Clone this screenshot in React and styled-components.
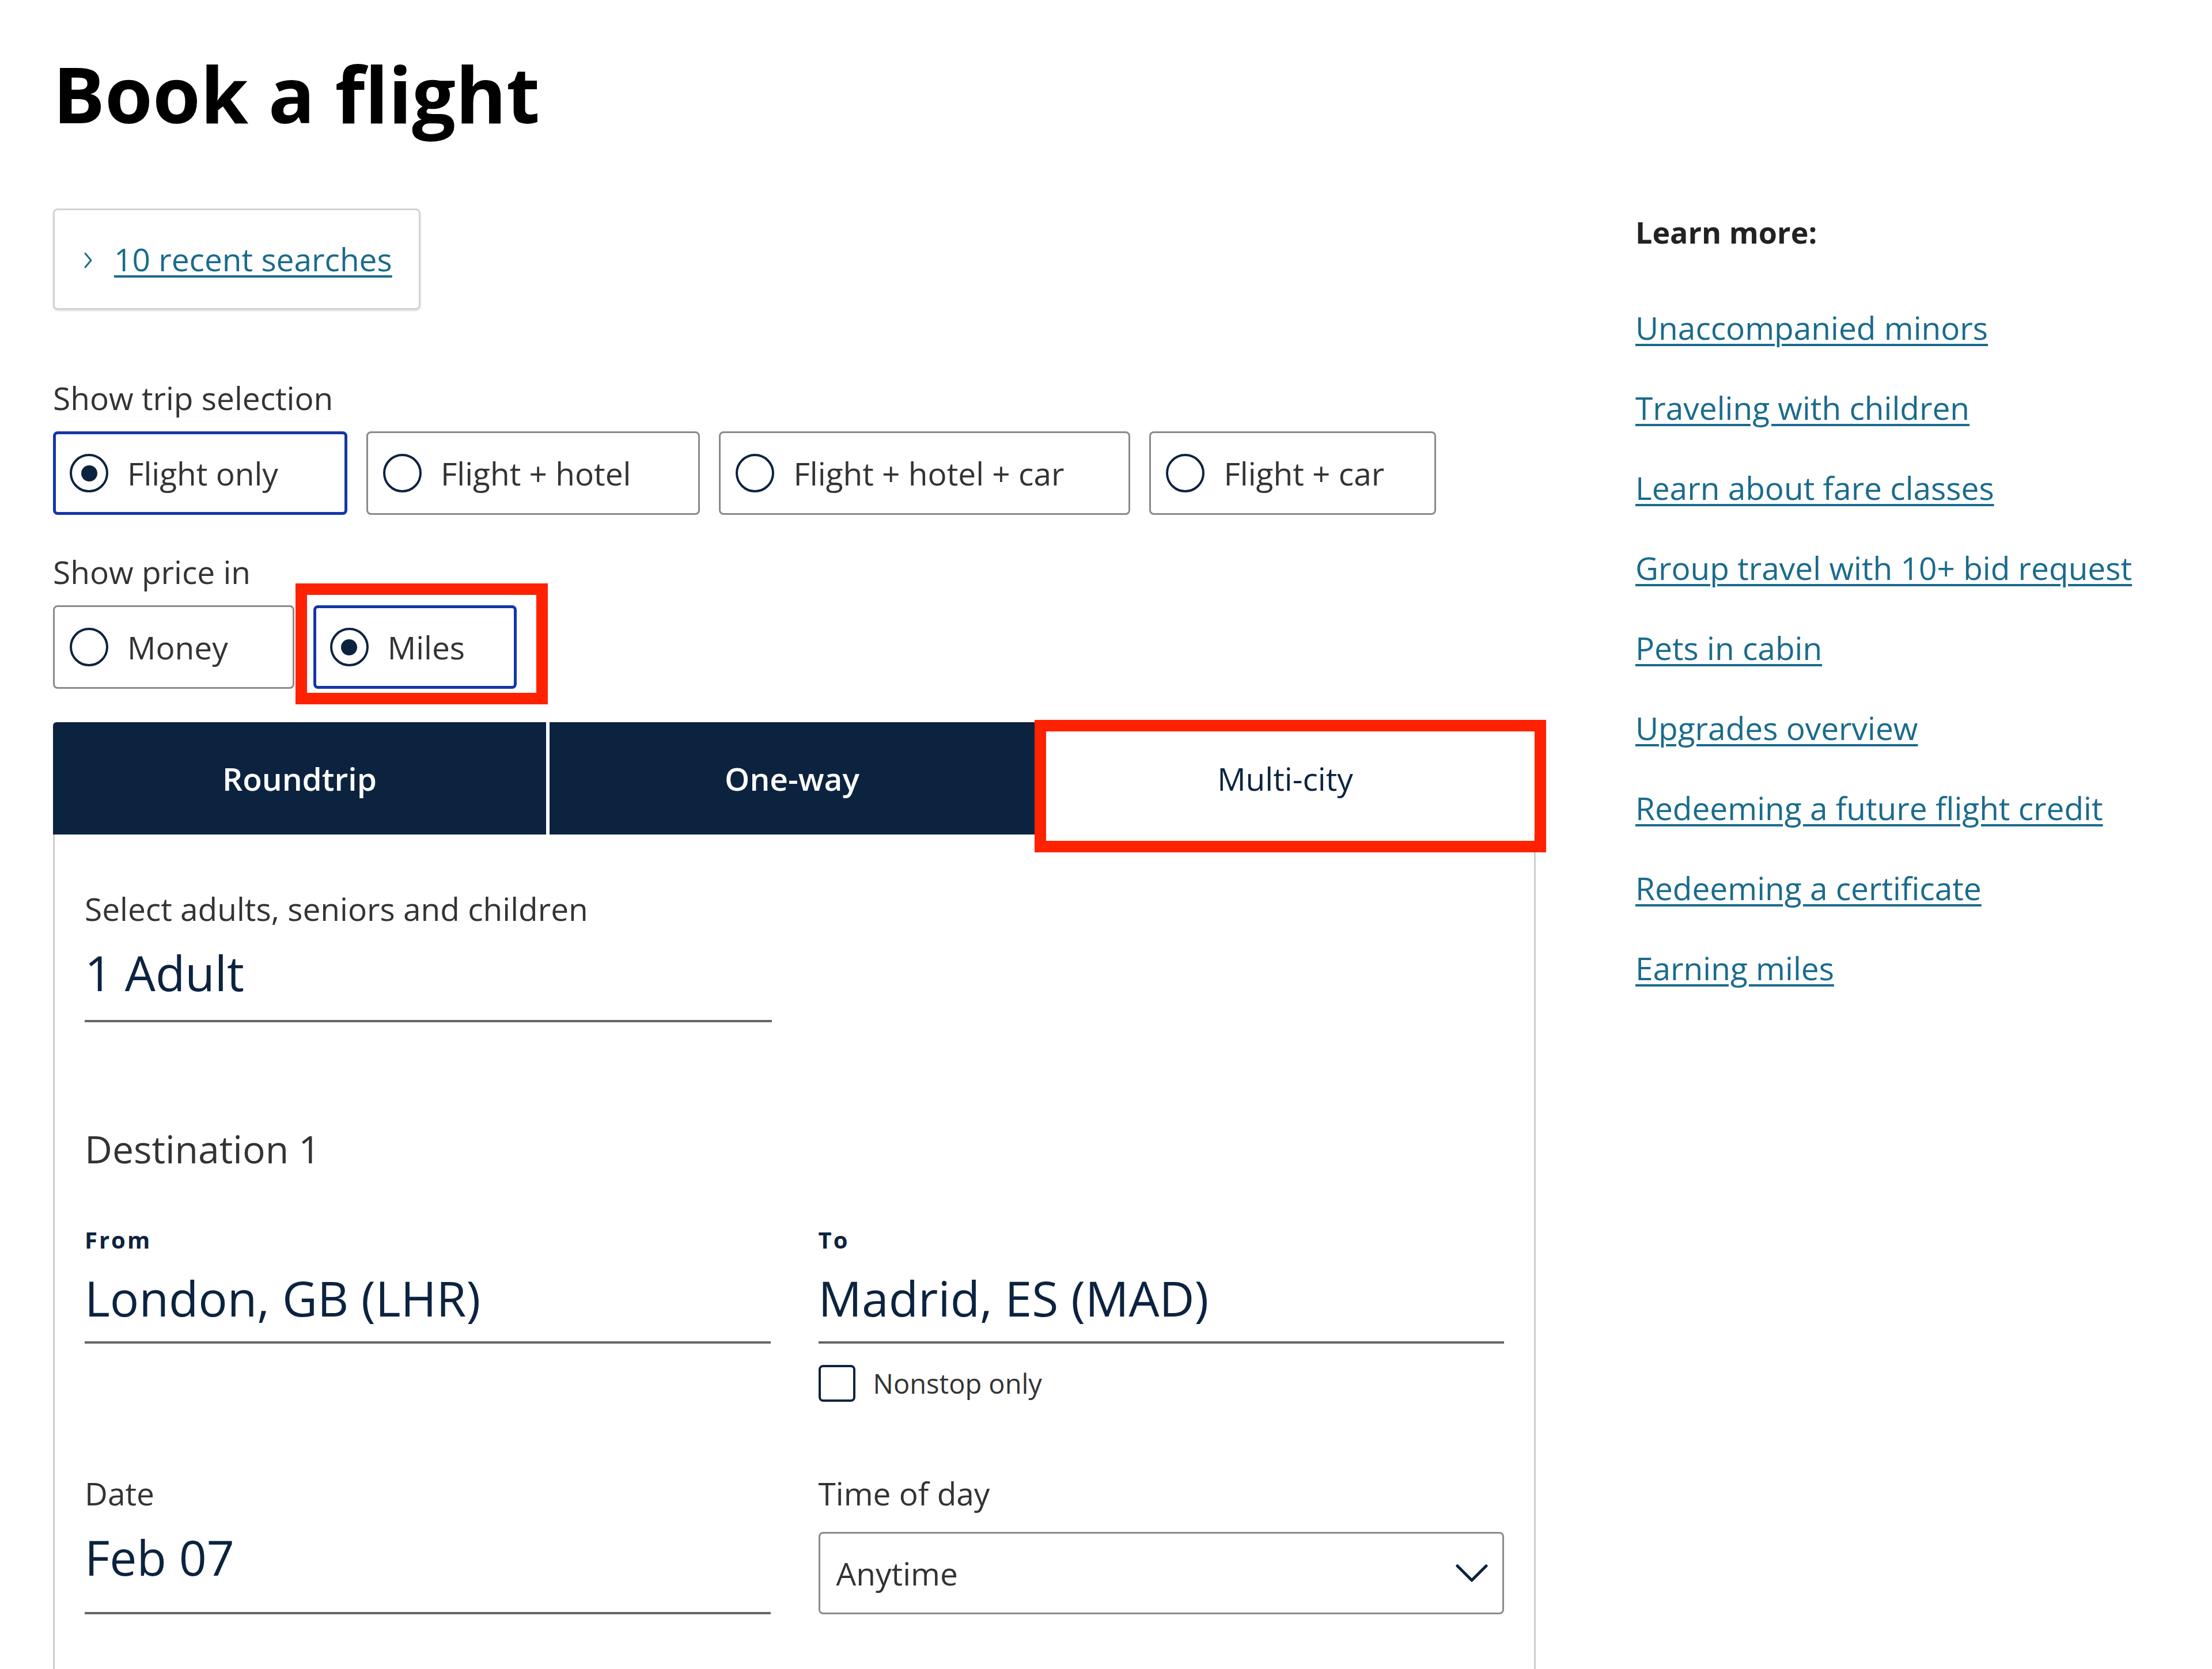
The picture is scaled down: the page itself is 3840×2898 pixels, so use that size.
import React from "react";
import styled, { createGlobalStyle } from "styled-components";

const GlobalStyle = createGlobalStyle`
  body {
    margin: 0;
    background: #fff;
    font-family: "Open Sans", "Noto Sans", sans-serif;
    color: #333;
  }
`;

const Page = styled.div`
  display: flex;
  gap: 173px;
  padding: 95px 0 0 92px;
`;

const Main = styled.div`
  width: 2574px;
  display: flex;
  flex-direction: column;
  align-items: flex-start;
`;

const Title = styled.h1`
  margin: 0;
  font-size: 134px;
  line-height: 134px;
  font-weight: 700;
  color: #000;
`;

const RecentBox = styled.div`
  margin-top: 133px;
  width: 638px;
  height: 176px;
  box-sizing: border-box;
  border: 3px solid #d2d2d2;
  border-radius: 8px;
  box-shadow: 0 2px 3px rgba(0, 0, 0, 0.12);
  display: flex;
  align-items: center;
  gap: 33px;
  padding-left: 48px;
`;

const TextLink = styled.a`
  color: #1a6b8c;
  font-size: 55px;
  line-height: 66px;
  text-decoration: underline;
  text-decoration-thickness: 4px;
  text-underline-offset: 7px;
  cursor: pointer;
`;

const SectionLabel = styled.div`
  margin-top: ${p => p.$top}px;
  font-size: 55px;
  line-height: 66px;
  color: #333;
`;

const OptionRow = styled.div`
  display: flex;
  gap: 33px;
  margin-top: 25px;
`;

const Option = styled.label`
  position: relative;
  height: 145px;
  box-sizing: border-box;
  display: flex;
  align-items: center;
  gap: 33px;
  border: ${p => (p.$selected ? "5px solid #1436a8" : "3px solid #8a8a8a")};
  border-radius: 8px;
  padding-left: ${p => (p.$selected ? 24 : 26)}px;
  padding-right: ${p => p.$padRight}px;
  font-size: 55px;
  line-height: 66px;
  color: #333;
  background: #fff;
`;

const Radio = styled.span`
  width: 67px;
  height: 67px;
  box-sizing: border-box;
  border: 4px solid #0c2340;
  border-radius: 50%;
  display: flex;
  align-items: center;
  justify-content: center;
  flex-shrink: 0;

  &::after {
    content: "";
    width: 28px;
    height: 28px;
    border-radius: 50%;
    background: ${p => (p.$checked ? "#0c2340" : "transparent")};
  }
`;

const Highlight = styled.span`
  position: absolute;
  top: ${p => p.$t}px;
  right: ${p => p.$r}px;
  bottom: ${p => p.$b}px;
  left: ${p => p.$l}px;
  border: 20px solid #ff2200;
  pointer-events: none;
`;

const Tabs = styled.div`
  margin-top: 58px;
  width: 100%;
  display: grid;
  grid-template-columns: 856px 848px 1fr;
  height: 195px;
`;

const Tab = styled.div`
  position: relative;
  display: flex;
  align-items: center;
  justify-content: center;
  font-size: 55px;
  line-height: 66px;
  font-weight: ${p => (p.$active ? 400 : 600)};
  background: ${p => (p.$active ? "#fff" : "#0c2340")};
  color: ${p => (p.$active ? "#0c2340" : "#fff")};
  border-left: ${p => (p.$divider ? "6px solid #fff" : "none")};
  border-top-left-radius: ${p => (p.$first ? "6px" : "0")};
`;

const Panel = styled.div`
  width: 100%;
  box-sizing: border-box;
  border-left: 3px solid #cfcfcf;
  border-right: 3px solid #cfcfcf;
  padding: 96px 52px 200px 52px;
`;

const HalfField = styled.div`
  width: 1193px;
`;

const Field = styled.div`
  display: flex;
  flex-direction: column;
`;

const FieldLabel = styled.div`
  font-size: 55px;
  line-height: 66px;
  color: #333;
`;

const SmallLabel = styled.div`
  font-size: 40px;
  line-height: 46px;
  font-weight: 700;
  letter-spacing: 3px;
  color: #0c2340;
`;

const Value = styled.div`
  margin-top: 28px;
  font-size: 84px;
  line-height: 100px;
  color: #0c2340;
  padding-bottom: ${p => p.$pad}px;
  border-bottom: 4px solid #666;
  flex: ${p => (p.$grow ? 1 : "none")};
`;

const Heading = styled.div`
  margin-top: 179px;
  font-size: 66px;
  line-height: 80px;
  color: #333;
`;

const FieldGrid = styled.div`
  margin-top: 96px;
  display: grid;
  grid-template-columns: 1fr 1fr;
  column-gap: 83px;
  row-gap: 126px;
`;

const CheckRow = styled.label`
  margin-top: 37px;
  display: flex;
  align-items: center;
  gap: 31px;
  font-size: 47px;
  line-height: 64px;
  color: #333;
`;

const CheckBox = styled.span`
  width: 64px;
  height: 64px;
  box-sizing: border-box;
  border: 4px solid #0c2340;
  border-radius: 8px;
`;

const SelectBox = styled.div`
  margin-top: 34px;
  height: 143px;
  box-sizing: border-box;
  border: 3px solid #8a8a8a;
  border-radius: 8px;
  display: flex;
  align-items: center;
  justify-content: space-between;
  padding: 0 25px 0 28px;
  font-size: 55px;
  line-height: 66px;
  color: #333;
`;

const Aside = styled.aside`
  margin-top: 275px;
  display: flex;
  flex-direction: column;
`;

const AsideTitle = styled.div`
  font-size: 52px;
  line-height: 66px;
  font-weight: 700;
  color: #222;
`;

const LinkList = styled.div`
  margin-top: 100px;
  display: flex;
  flex-direction: column;
  align-items: flex-start;
  gap: 73px;
`;

const tripOptions = [
  { label: "Flight only", pad: 115, selected: true },
  { label: "Flight + hotel", pad: 117 },
  { label: "Flight + hotel + car", pad: 112 },
  { label: "Flight + car", pad: 87 },
];

const learnLinks = [
  "Unaccompanied minors",
  "Traveling with children",
  "Learn about fare classes",
  "Group travel with 10+ bid request",
  "Pets in cabin",
  "Upgrades overview",
  "Redeeming a future flight credit",
  "Redeeming a certificate",
  "Earning miles",
];

const Chevron = () => (
  <svg width="22" height="36" viewBox="0 0 22 36" fill="none">
    <path d="M5 8 L15 20 L5 32" stroke="#1a6b8c" strokeWidth="3" strokeLinecap="round" strokeLinejoin="round" />
  </svg>
);

const ChevronDown = () => (
  <svg width="56" height="34" viewBox="0 0 56 34" fill="none">
    <path d="M3 4 L28 29 L53 4" stroke="#0c2340" strokeWidth="5" strokeLinecap="round" strokeLinejoin="round" />
  </svg>
);

export default function App() {
  return (
    <>
      <GlobalStyle />
      <Page>
        <Main>
          <Title>Book a flight</Title>

          <RecentBox>
            <Chevron />
            <TextLink>10 recent searches</TextLink>
          </RecentBox>

          <SectionLabel $top={120}>Show trip selection</SectionLabel>
          <OptionRow>
            {tripOptions.map(o => (
              <Option key={o.label} $selected={o.selected} $padRight={o.pad}>
                <Radio $checked={o.selected} />
                {o.label}
              </Option>
            ))}
          </OptionRow>

          <SectionLabel $top={66}>Show price in</SectionLabel>
          <OptionRow>
            <Option $padRight={112}>
              <Radio />
              Money
            </Option>
            <Option $selected $padRight={85}>
              <Radio $checked />
              Miles
              <Highlight $t={-43} $r={-59} $b={-32} $l={-36} />
            </Option>
          </OptionRow>

          <Tabs>
            <Tab $first>Roundtrip</Tab>
            <Tab $divider>One-way</Tab>
            <Tab $active>
              Multi-city
              <Highlight $t={-4} $r={-18} $b={-31} $l={0} />
            </Tab>
          </Tabs>

          <Panel>
            <HalfField>
              <FieldLabel>Select adults, seniors and children</FieldLabel>
              <Value $pad={32}>1 Adult</Value>
            </HalfField>

            <Heading>Destination 1</Heading>

            <FieldGrid>
              <Field>
                <SmallLabel>From</SmallLabel>
                <Value $pad={25}>London, GB (LHR)</Value>
              </Field>
              <div>
                <Field>
                  <SmallLabel>To</SmallLabel>
                  <Value $pad={25}>Madrid, ES (MAD)</Value>
                </Field>
                <CheckRow>
                  <CheckBox />
                  Nonstop only
                </CheckRow>
              </div>

              <Field>
                <FieldLabel>Date</FieldLabel>
                <Value $pad={0} $grow>Feb 07</Value>
              </Field>
              <div>
                <FieldLabel>Time of day</FieldLabel>
                <SelectBox>
                  Anytime
                  <ChevronDown />
                </SelectBox>
              </div>
            </FieldGrid>
          </Panel>
        </Main>

        <Aside>
          <AsideTitle>Learn more:</AsideTitle>
          <LinkList>
            {learnLinks.map(l => (
              <TextLink key={l}>{l}</TextLink>
            ))}
          </LinkList>
        </Aside>
      </Page>
    </>
  );
}
